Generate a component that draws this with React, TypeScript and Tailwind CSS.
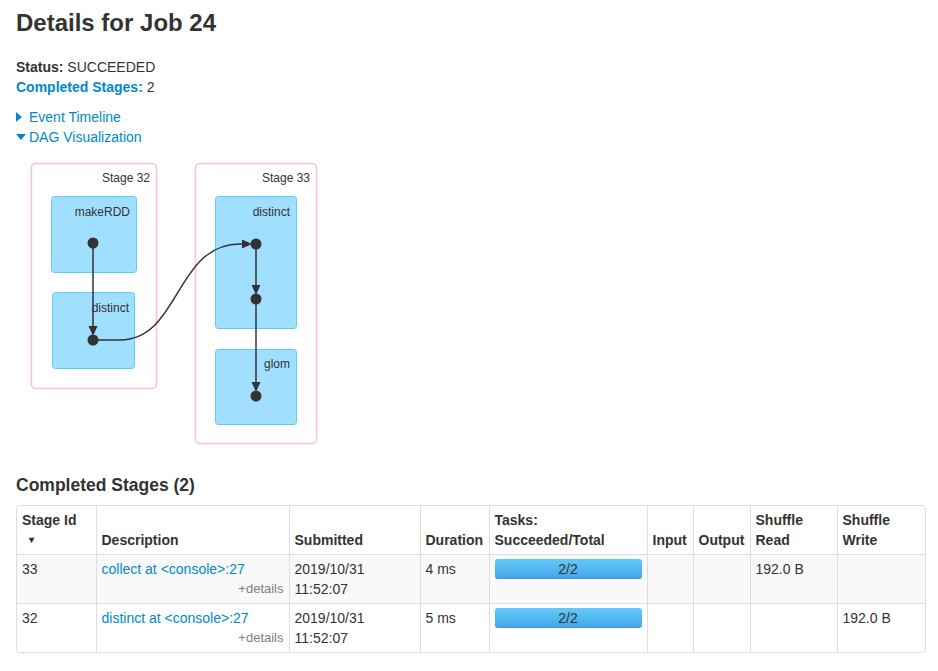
// Spark UI - job details page
const LINK = "text-[#0088cc]";

type Stage = {
  id: string;
  desc: string;
  submitted: [string, string];
  duration: string;
  tasks: string;
  shuffleRead: string;
  shuffleWrite: string;
};

const stages: Stage[] = [
  { id: "33", desc: "collect at <console>:27", submitted: ["2019/10/31", "11:52:07"], duration: "4 ms", tasks: "2/2", shuffleRead: "192.0 B", shuffleWrite: "" },
  { id: "32", desc: "distinct at <console>:27", submitted: ["2019/10/31", "11:52:07"], duration: "5 ms", tasks: "2/2", shuffleRead: "", shuffleWrite: "192.0 B" },
];

function DagViz() {
  const cluster = "fill-white stroke-[#ffbfcb]";
  const node = "fill-[#a0dfff] stroke-[#5ccbff]";
  return (
    <svg width="320" height="292" className="block" style={{ fontFamily: "'Liberation Sans', Arial, sans-serif" }}>
      {/* stage clusters */}
      <rect x="15.5" y="8.5" width="125" height="225" rx="4" className={cluster} strokeWidth="1.5" />
      <rect x="179.5" y="8.5" width="121" height="280" rx="4" className={cluster} strokeWidth="1.5" />
      <text x="134" y="27" textAnchor="end" fontSize="12" fill="#333">Stage 32</text>
      <text x="294" y="27" textAnchor="end" fontSize="12" fill="#333">Stage 33</text>

      {/* rdd nodes */}
      <rect x="35.5" y="41.5" width="85" height="76" rx="3" className={node} />
      <rect x="36.5" y="137.5" width="82" height="76" rx="3" className={node} />
      <rect x="199.5" y="41.5" width="81" height="132" rx="3" className={node} />
      <rect x="199.5" y="194.5" width="81" height="75" rx="3" className={node} />
      <text x="114" y="61" textAnchor="end" fontSize="12" fill="#333">makeRDD</text>
      <text x="113" y="157" textAnchor="end" fontSize="12" fill="#333">distinct</text>
      <text x="274" y="61" textAnchor="end" fontSize="12" fill="#333">distinct</text>
      <text x="274" y="213" textAnchor="end" fontSize="12" fill="#333">glom</text>

      {/* edges */}
      <g stroke="#333" strokeWidth="1.5" fill="none">
        <path d="M77 88 L77 172" />
        <path d="M77 185 L104 185 C164 185 159 89 224 89 L228 89" />
        <path d="M240 89 L240 131" />
        <path d="M240 144 L240 228" />
      </g>
      <g fill="#333">
        <polygon points="72.5,171 81.5,171 77,181" />
        <polygon points="226,84.5 226,93.5 236,89" />
        <polygon points="235.5,130 244.5,130 240,140" />
        <polygon points="235.5,227 244.5,227 240,237" />
        <circle cx="77" cy="88" r="5.5" />
        <circle cx="77" cy="185" r="5.5" />
        <circle cx="240" cy="89" r="5.5" />
        <circle cx="240" cy="144" r="5.5" />
        <circle cx="240" cy="241" r="5.5" />
      </g>
    </svg>
  );
}

function StagesTable() {
  const th = "border-l border-[#ddd] first:border-l-0 px-[5px] pt-[4px] pb-[4px] text-left align-bottom font-bold";
  const td = "border-l border-t border-[#ddd] first:border-l-0 px-[5px] py-[4px] align-top";
  return (
    <div className="w-[910px] border border-[#ddd] rounded overflow-hidden">
      <table className="w-full table-fixed border-collapse">
        <colgroup>
          <col className="w-[79px]" />
          <col className="w-[193px]" />
          <col className="w-[131px]" />
          <col className="w-[69px]" />
          <col className="w-[158px]" />
          <col className="w-[46px]" />
          <col className="w-[57px]" />
          <col className="w-[87px]" />
          <col />
        </colgroup>
        <thead>
          <tr>
            <th className={th}>
              Stage Id
              <span className="block pl-[7px] text-[10px]">▾</span>
            </th>
            <th className={th}>Description</th>
            <th className={th}>Submitted</th>
            <th className={th}>Duration</th>
            <th className={th}>Tasks: Succeeded/Total</th>
            <th className={th}>Input</th>
            <th className={th}>Output</th>
            <th className={th}>Shuffle Read</th>
            <th className={th}>Shuffle Write</th>
          </tr>
        </thead>
        <tbody>
          {stages.map((s, i) => (
            <tr key={s.id} className={i % 2 === 0 ? "bg-[#f9f9f9]" : "bg-white"}>
              <td className={td}>{s.id}</td>
              <td className={td}>
                <div className={LINK}>{s.desc}</div>
                <div className="text-right text-[13px] text-[#808080]">+details</div>
              </td>
              <td className={td}>
                {s.submitted[0]}
                <br />
                {s.submitted[1]}
              </td>
              <td className={td}>{s.duration}</td>
              <td className={td}>
                <div className="h-5 rounded-[3px] bg-gradient-to-b from-[#64c9fb] to-[#44a8e6] border-b border-[#3d9ad6] text-center text-[14px] leading-5">
                  {s.tasks}
                </div>
              </td>
              <td className={td}></td>
              <td className={td}></td>
              <td className={td}>{s.shuffleRead}</td>
              <td className={td}>{s.shuffleWrite}</td>
            </tr>
          ))}
        </tbody>
      </table>
    </div>
  );
}

export default function App() {
  return (
    <div className="min-h-screen bg-white px-4 text-[14px] leading-5 text-[#333]" style={{ fontFamily: "'Liberation Sans', Arial, sans-serif" }}>
      <h3 className="pt-[10px] text-[24px] leading-[26px] font-bold">Details for Job 24</h3>

      {/* Job summary */}
      <ul className="mt-[21px]">
        <li>
          <strong>Status:</strong> SUCCEEDED
        </li>
        <li>
          <strong className={LINK}>Completed Stages:</strong> 2
        </li>
      </ul>

      {/* Collapsible sections */}
      <div className={`mt-[10px] ${LINK}`}>
        <div className="flex items-center">
          <svg width="6" height="10" className="mr-[7px]">
            <polygon points="0,0 6,5 0,10" fill="#0088cc" />
          </svg>
          Event Timeline
        </div>
        <div className="flex items-center">
          <svg width="10" height="6" className="mr-[3px]">
            <polygon points="0,0 10,0 5,6" fill="#0088cc" />
          </svg>
          DAG Visualization
        </div>
      </div>

      <div className="mt-2">
        <DagViz />
      </div>

      <h4 className="mt-[27px] mb-[9px] text-[17.5px] leading-[22px] font-bold">Completed Stages (2)</h4>
      <StagesTable />
    </div>
  );
}
